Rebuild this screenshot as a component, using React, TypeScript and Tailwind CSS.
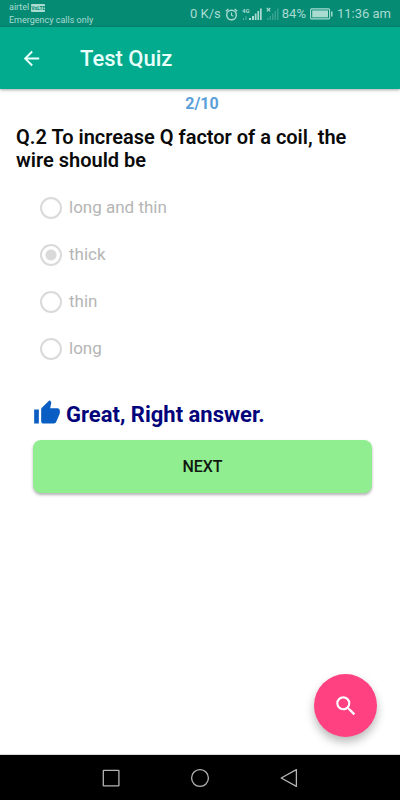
import { MdArrowBack, MdSearch, MdThumbUp } from 'react-icons/md';

const question = {
  number: 2,
  total: 10,
  text: 'To increase Q factor of a coil, the wire should be',
  options: ['long and thin', 'thick', 'thin', 'long'],
  answer: 'thick',
};

function AlarmIcon() {
  return (
    <svg className="w-[13px] h-[13px]" viewBox="0 0 13 13" fill="none" stroke="currentColor" aria-hidden="true">
      <circle cx="6.5" cy="7" r="4.8" strokeWidth="1.4" />
      <path d="M6.5 4.4V7.2L8.3 8.3" strokeWidth="1.1" />
      <path d="M0.8 3.2L3.4 1M12.2 3.2L9.6 1" strokeWidth="1.4" />
    </svg>
  );
}

function SignalIcon() {
  return (
    <svg className="w-[20px] h-[14px]" viewBox="0 0 20 14" fill="currentColor" aria-hidden="true">
      <text x="0" y="6" className="text-[6px] font-bold">4G</text>
      <path d="M1 11h1v2H1zM3.5 9h1v4h-1z" opacity="0.5" />
      <path d="M7 11h2v2H7zM10 9h2v4h-2zM12.8 6.5h1.7v6.5h-1.7zM15.4 4h1.7v9h-1.7zM18 1.5h1.7V13H18z" />
    </svg>
  );
}

function NoSignalIcon() {
  return (
    <svg className="w-[13px] h-[14px]" viewBox="0 0 13 14" fill="currentColor" aria-hidden="true">
      <path d="M0.8 1L4.2 4.4M4.2 1L0.8 4.4" stroke="currentColor" strokeWidth="1.1" />
      <path d="M1 11h1.5v2H1zM3.5 9H5v4H3.5zM6 6.5h1.5V13H6zM8.5 4H10v9H8.5zM11 1.5h1.5V13H11z" opacity="0.3" />
    </svg>
  );
}

function BatteryIcon() {
  return (
    <svg className="w-[23px] h-[12px]" viewBox="0 0 23 12" fill="none" aria-hidden="true">
      <rect x="0.6" y="0.9" width="19" height="10" rx="1" stroke="currentColor" strokeWidth="1.1" />
      <rect x="2.2" y="2.4" width="15.8" height="7" fill="currentColor" />
      <path d="M21.8 3.5v5" stroke="currentColor" strokeWidth="1.4" />
    </svg>
  );
}

function StatusBar() {
  return (
    <div className="h-[27px] bg-[#058a74] text-[#a9dbd1] flex justify-between pl-[9px] pr-[9px]">
      <div className="text-[9px] leading-[13px] pt-px">
        <div className="flex items-center gap-0.5">
          <span>airtel</span>
          <span className="bg-[#a9dbd1] text-[#058a74] text-[5px] leading-[8px] font-bold rounded-[1px]">VoLTE</span>
        </div>
        <div>Emergency calls only</div>
      </div>
      <div className="flex items-center text-[13px] pt-px">
        <span>0 K/s</span>
        <span className="flex items-center gap-1 ml-1 mr-[3px]">
          <AlarmIcon />
          <SignalIcon />
          <NoSignalIcon />
        </span>
        <span>84%</span>
        <span className="mx-1"><BatteryIcon /></span>
        <span>11:36 am</span>
      </div>
    </div>
  );
}

function NavBar() {
  return (
    <nav className="h-[46px] bg-black text-[#b4b4b4] border-t border-[#d8d8d8] flex items-center justify-center gap-[69px]">
      <button aria-label="Recent apps">
        <svg className="w-5 h-5" viewBox="0 0 20 20" fill="none" stroke="currentColor" strokeWidth="1.3">
          <rect x="2.3" y="2.3" width="15.6" height="15.6" rx="0.5" />
        </svg>
      </button>
      <button aria-label="Home">
        <svg className="w-5 h-5" viewBox="0 0 20 20" fill="none" stroke="currentColor" strokeWidth="1.3">
          <circle cx="10" cy="10" r="8.4" />
        </svg>
      </button>
      <button aria-label="Back">
        <svg className="w-5 h-5" viewBox="0 0 20 20" fill="none" stroke="currentColor" strokeWidth="1.3" strokeLinejoin="round">
          <path d="M17.4 1.6V18.4L2.2 10Z" />
        </svg>
      </button>
    </nav>
  );
}

export default function App() {
  return (
    <div className="min-h-screen bg-white flex flex-col font-[Roboto,sans-serif]">
      <StatusBar />

      {/* App bar */}
      <header className="h-[62px] bg-[#02aa8e] text-[#e9fffa] flex items-center pl-5 gap-[37px] shadow-[0_1px_3px_rgba(0,0,0,0.35)]">
        <button aria-label="Back">
          <MdArrowBack className="w-[23px] h-[23px]" />
        </button>
        <h1 className="text-[22px] leading-7 font-medium pt-0.5">Test Quiz</h1>
      </header>

      <main className="flex-1 relative">
        <p className="text-center text-base leading-5 font-bold text-[#5a9fd8] pl-1 pt-[5px]">
          {`${question.number}/${question.total}`}
        </p>

        <h2 className="px-4 pt-[12px] text-xl leading-[23px] font-semibold text-[#0a0a0a]">
          {`Q.${question.number} ${question.text}`}
        </h2>

        {/* Options are locked once the question is answered */}
        <fieldset disabled className="px-10 mt-3">
          {question.options.map((option) => (
            <label key={option} className="h-[47px] flex items-center gap-[7px] text-[17px] text-[#b5b5b5]">
              <input
                type="radio"
                name="answer"
                value={option}
                defaultChecked={option === question.answer}
                className="appearance-none w-[22px] h-[22px] rounded-full border-2 border-[#dadada] checked:bg-[radial-gradient(circle,#dadada_5px,transparent_6px)]"
              />
              {option}
            </label>
          ))}
        </fieldset>

        <div className="pl-[33px] pr-7 mt-[29px]">
          <p className="flex items-center gap-[5px] text-[22px] leading-7 font-bold text-[#04047a]">
            <MdThumbUp className="w-7 h-7 -mt-1 text-[#0a5dc2]" />
            Great, Right answer.
          </p>
          <button className="mt-[11px] w-full h-[53px] rounded-lg bg-[#90ee90] text-[#101810] text-base font-medium shadow-[0_2px_3px_rgba(0,0,0,0.3)]">
            NEXT
          </button>
        </div>

        <button
          aria-label="Search"
          className="absolute right-[23px] bottom-[17px] w-[63px] h-[63px] rounded-full bg-[#ff4081] text-white flex items-center justify-center shadow-[0_5px_10px_rgba(0,0,0,0.28)]"
        >
          <MdSearch className="w-[26px] h-[26px]" />
        </button>
      </main>

      <NavBar />
    </div>
  );
}
